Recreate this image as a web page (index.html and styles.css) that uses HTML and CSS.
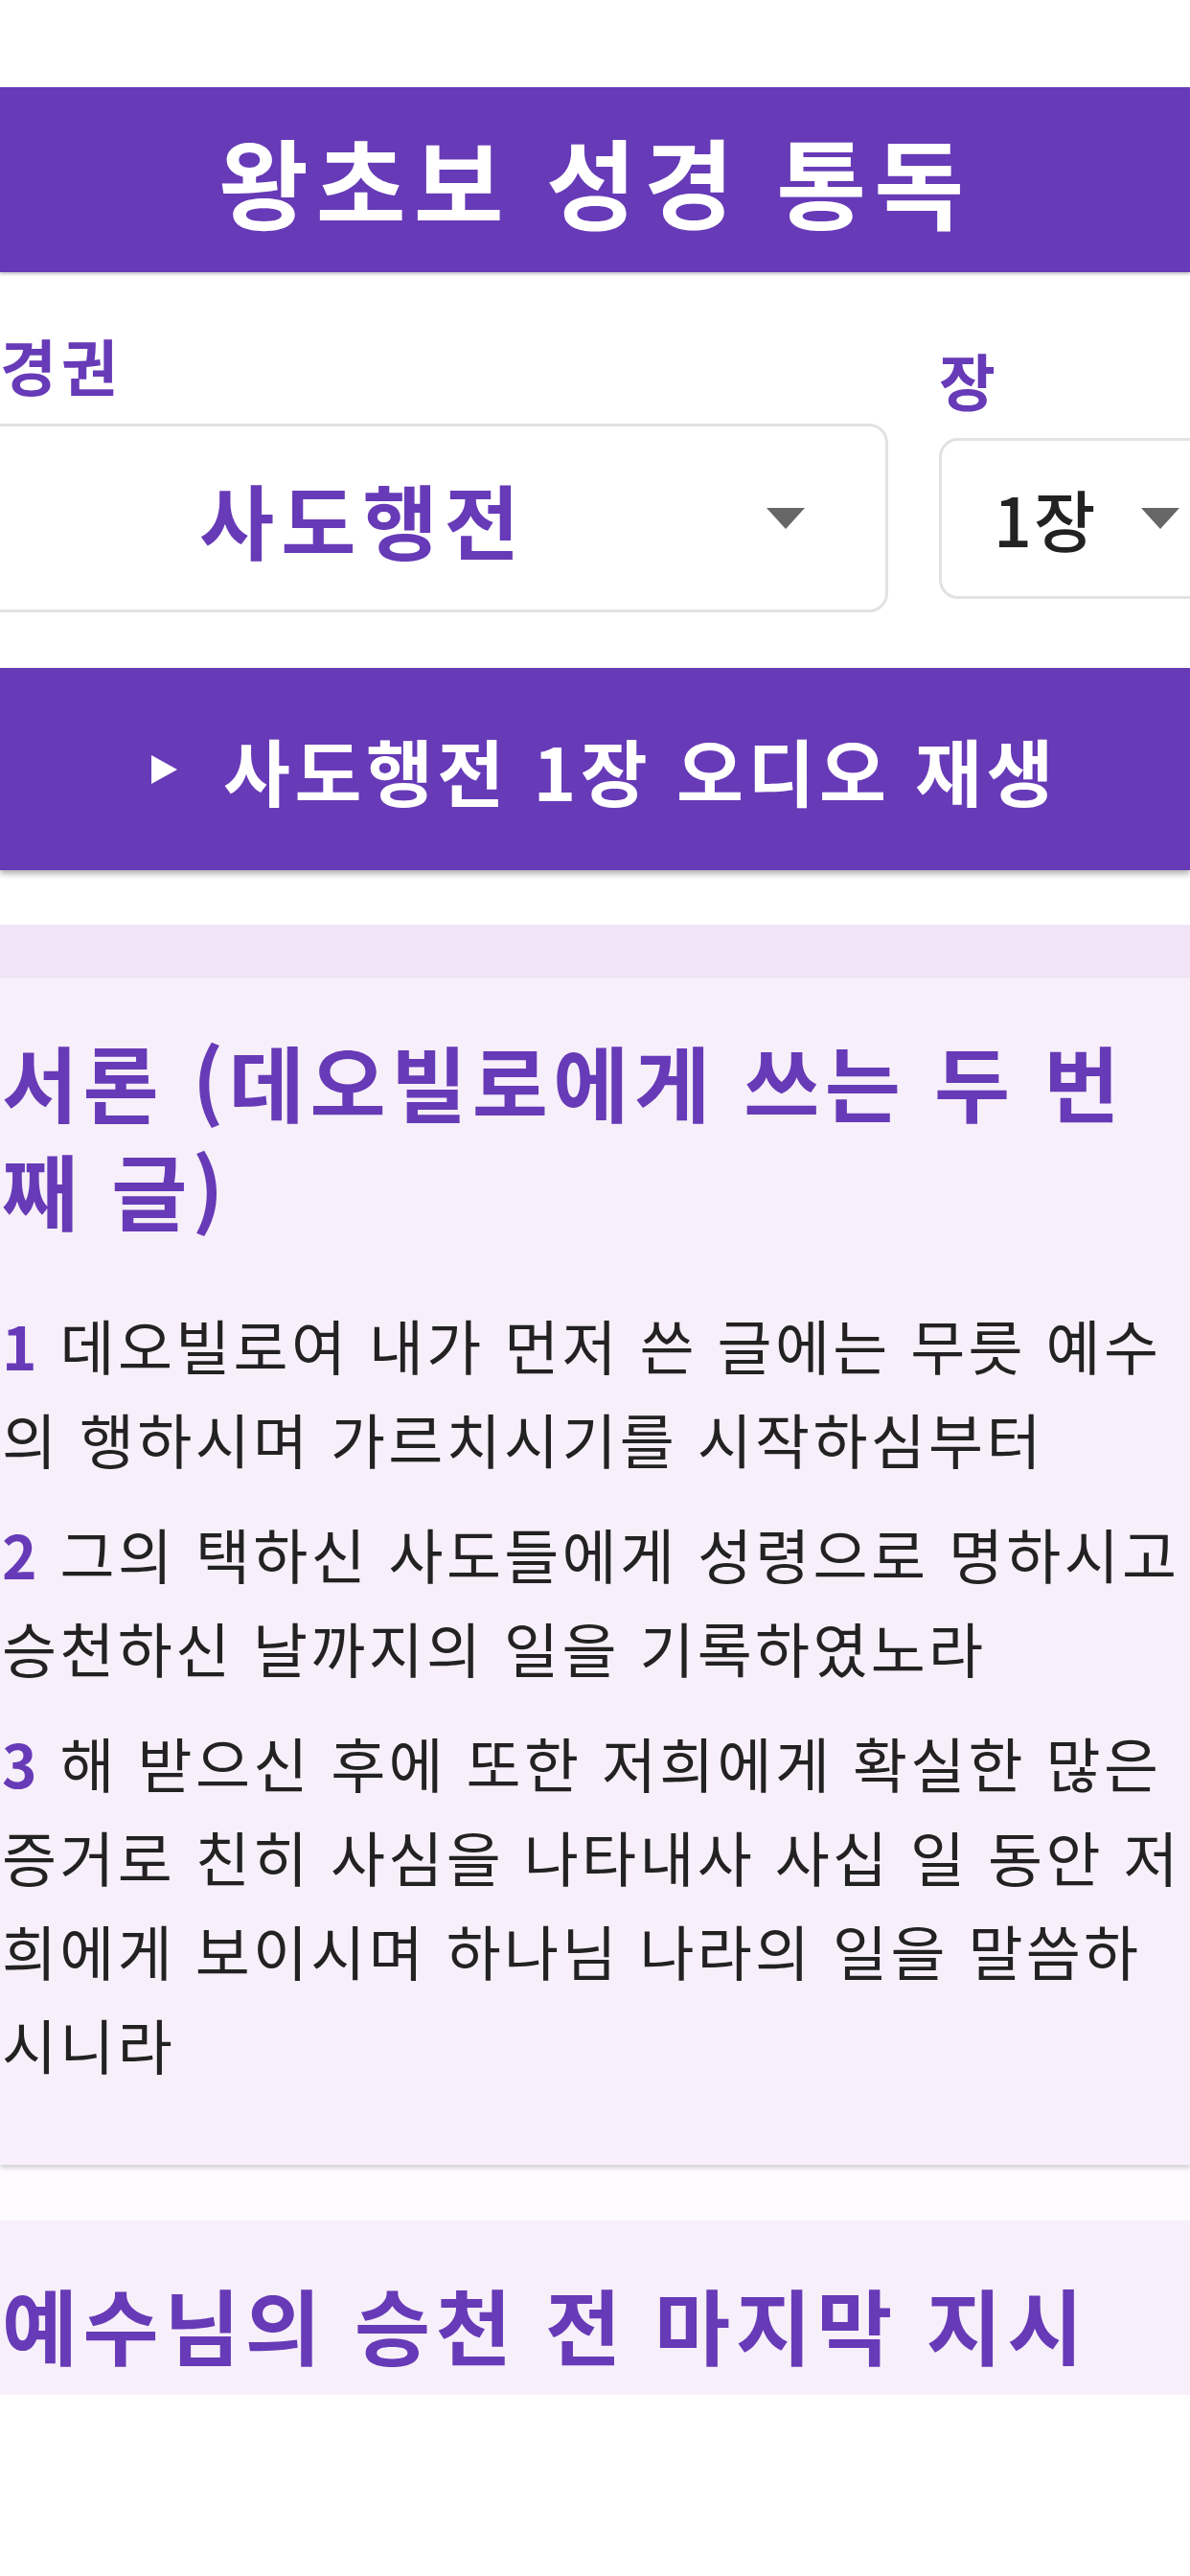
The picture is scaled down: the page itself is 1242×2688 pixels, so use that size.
FILE: index.html
```html
<!DOCTYPE html>
<html lang="ko">
<head>
<meta charset="utf-8">
<title>왕초보 성경 통독</title>
<link rel="stylesheet" href="styles.css">
</head>
<body>
<header class="topBar"><h1>왕초보 성경 통독</h1></header>

<div class="pickers">
  <div class="field book">
    <label class="fieldLabel">경권</label>
    <div class="selectBox bookSelect">
      <span class="selValue">사도행전</span>
      <span class="caret"></span>
    </div>
  </div>
  <div class="field chapter">
    <label class="fieldLabel">장</label>
    <div class="selectBox chapSelect">
      <span class="selValue">1장</span>
      <span class="caret"></span>
    </div>
  </div>
</div>

<button class="playBtn" type="button"><span class="playIcon"></span>사도행전 1장 오디오 재생</button>

<div class="chapterBand"></div>
<div class="cardList">
<section class="card">
<h2>서론 (데오빌로에게 쓰는 두 번 째 글)</h2>
<p class="verse"><span class="vnum">1</span> 데오빌로여 내가 먼저 쓴 글에는 무릇 예수의 행하시며 가르치시기를 시작하심부터</p>
<p class="verse"><span class="vnum">2</span> 그의 택하신 사도들에게 성령으로 명하시고 승천하신 날까지의 일을 기록하였노라</p>
<p class="verse"><span class="vnum">3</span> 해 받으신 후에 또한 저희에게 확실한 많은 증거로 친히 사심을 나타내사 사십 일 동안 저희에게 보이시며 하나님 나라의 일을 말씀하시니라</p>
</section>
<section class="card next">
<h2>예수님의 승천 전 마지막 지시</h2>
</section>
</div>
</body>
</html>
```

FILE: styles.css
```css
body {
	margin: 0;
	width: 1242px;
	background: #fff;
	font-family: "Noto Sans CJK KR", "Noto Sans", sans-serif;
	overflow-x: hidden;
}

.topBar {
	margin-top: 91px;
	height: 193px;
	background: #673ab7;
	display: flex;
	align-items: center;
	justify-content: center;
	box-shadow: 0 2px 3px rgba(0,0,0,.25);
}

.topBar h1 {
	margin: 0;
	color: #fff;
	font-size: 102px;
	line-height: 1;
	font-weight: 700;
	letter-spacing: 8px;
}

.pickers {
	display: flex;
	align-items: center;
	gap: 53px;
	margin-top: 56px;
}

.field {
	display: flex;
	flex-direction: column;
	gap: 22px;
}

.fieldLabel {
	font-size: 64px;
	line-height: 80px;
	font-weight: 700;
	color: #673ab7;
	letter-spacing: 5px;
}

.book {
	flex: 0 0 973px;
	margin-left: -46px;
}

.book .fieldLabel {
	padding-left: 46px;
}

.chapter {
	flex: 0 0 300px;
}

.selectBox {
	display: flex;
	align-items: center;
	box-sizing: border-box;
	background: #fff;
	border: 3px solid #e2e2e2;
	border-radius: 20px;
}

.bookSelect {
	height: 197px;
	padding-right: 84px;
}

.bookSelect .selValue {
	flex: 1;
	text-align: center;
	font-size: 85px;
	font-weight: 700;
	color: #673ab7;
	letter-spacing: 7px;
}

.chapSelect {
	height: 168px;
	padding-left: 54px;
}

.chapSelect .selValue {
	font-size: 70px;
	font-weight: 500;
	color: #222;
	letter-spacing: 2px;
	margin-right: 46px;
}

.caret {
	width: 0;
	height: 0;
	border-left: 20px solid transparent;
	border-right: 20px solid transparent;
	border-top: 22px solid #666;
}

.playBtn {
	display: flex;
	align-items: center;
	justify-content: center;
	width: 100%;
	height: 211px;
	margin-top: 58px;
	padding: 0 0 0 20px;
	border: 0;
	background: #673ab7;
	color: #fff;
	font: inherit;
	font-size: 76px;
	font-weight: 700;
	letter-spacing: 4.5px;
	box-shadow: 0 4px 6px rgba(0,0,0,.3);
}

.playIcon {
	width: 0;
	height: 0;
	border-left: 27px solid #fff;
	border-top: 15px solid transparent;
	border-bottom: 15px solid transparent;
	margin-right: 48px;
}

.chapterBand {
	margin-top: 57px;
	height: 55px;
	background: #f1e4f6;
}

.cardList {
	background: #fdfbfe;
}

.card {
	background: #f7eff9;
	padding: 51px 0 55px 2px;
	box-shadow: 0 3px 5px rgba(0,0,0,.18);
}

.card h2 {
	margin: 0 0 57px;
	font-size: 86px;
	line-height: 113px;
	font-weight: 700;
	color: #673ab7;
	letter-spacing: 5.5px;
}

.verse {
	margin: 0 0 22px;
	font-size: 62px;
	line-height: 98px;
	color: #222;
	letter-spacing: 3.3px;
}

.vnum {
	color: #673ab7;
	font-weight: 700;
}

.card.next {
	margin-top: 58px;
	padding-bottom: 18px;
	box-shadow: none;
}

.card.next h2 {
	margin: 0;
}
```
